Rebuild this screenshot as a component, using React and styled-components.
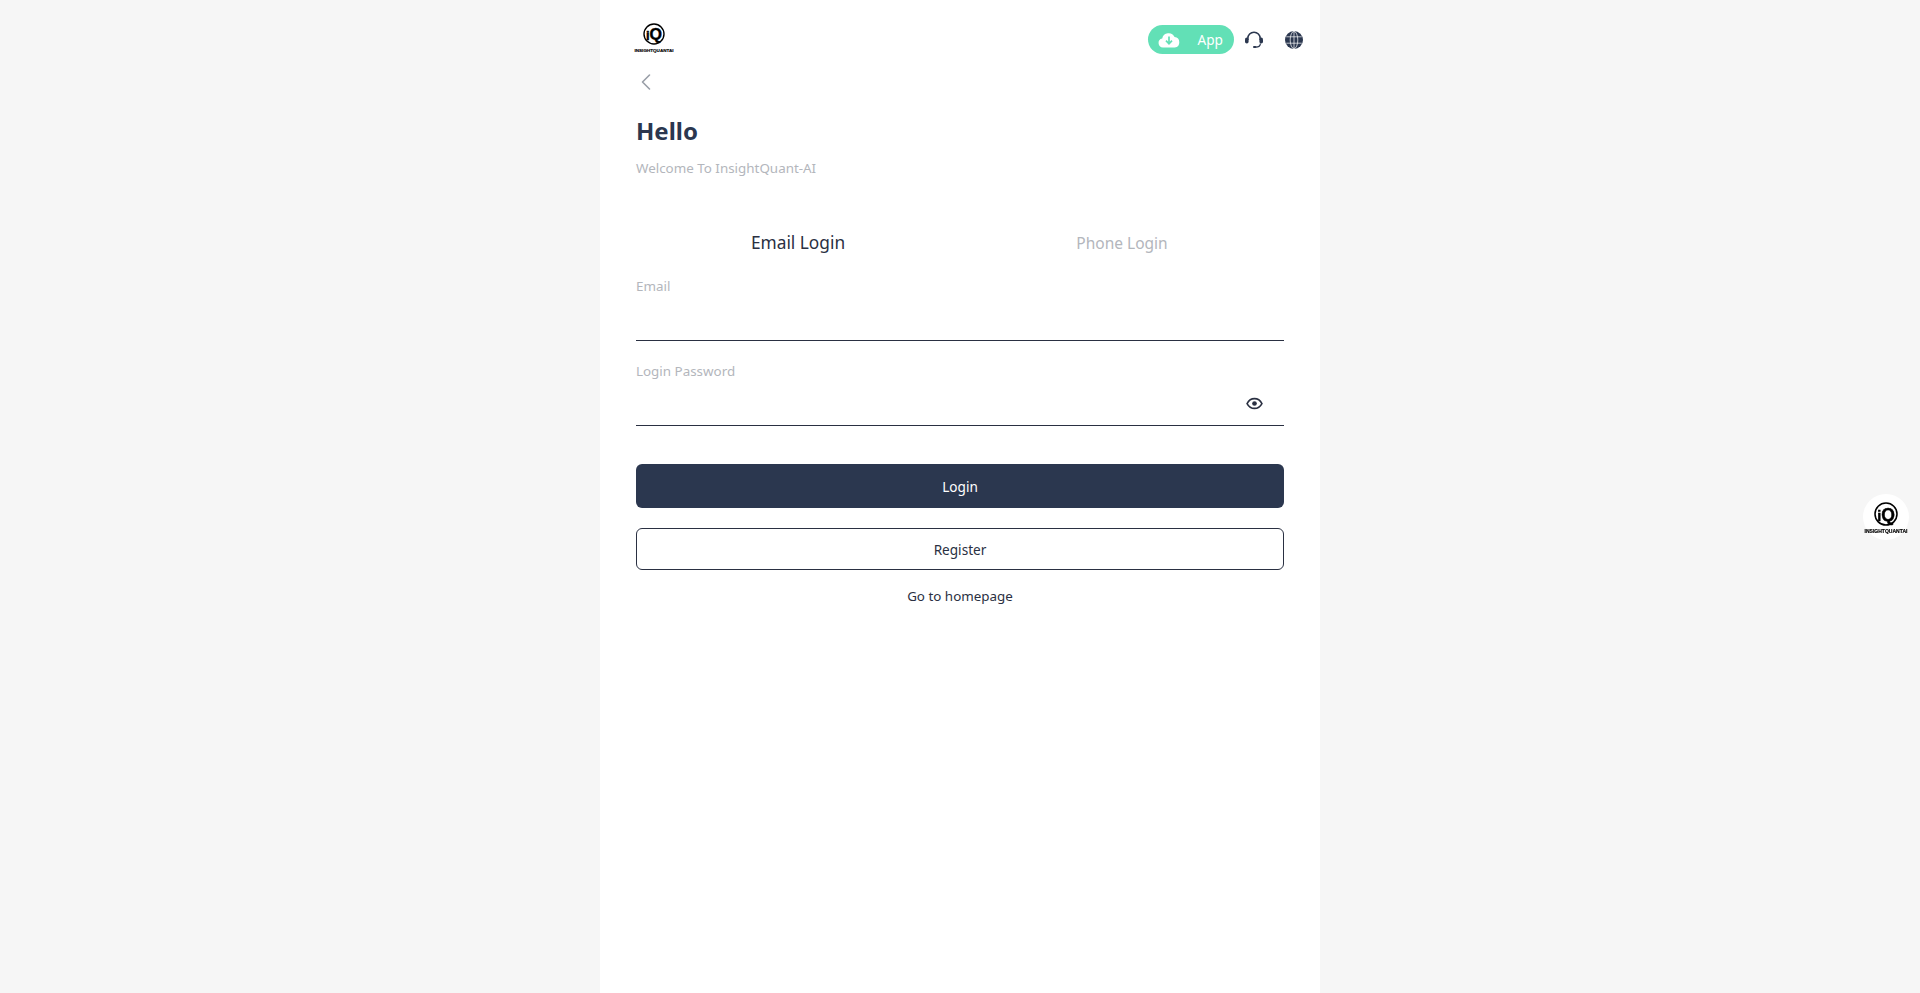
import React from 'react';
import styled, { createGlobalStyle } from 'styled-components';
import { ChevronLeft } from 'lucide-react';

const GlobalStyle = createGlobalStyle`
  html, body {
    margin: 0;
    padding: 0;
    background: #f6f6f6;
    font-family: "Noto Sans", "Open Sans", sans-serif;
    color: #2b374f;
  }
  * {
    box-sizing: border-box;
  }
`;

const Logo = ({ size = 40 }) => (
  <LogoSvg width={size} height={size * 0.8} viewBox="0 0 40 32">
    <circle cx="20" cy="11" r="10" fill="#fff" stroke="#000" strokeWidth="1.4" />
    <text x="20" y="17" textAnchor="middle" fontFamily="Liberation Sans" fontWeight="700" fill="#000" stroke="#000" strokeWidth="0.4">
      <tspan fontSize="13">i</tspan>
      <tspan fontSize="16">Q</tspan>
    </text>
    <text x="20" y="28.500" textAnchor="middle" fontFamily="Liberation Sans" fontWeight="700" fontSize="4.3" textLength="39" lengthAdjust="spacingAndGlyphs" fill="#000" stroke="#000" strokeWidth="0.15">
      INSIGHTQUANTAI
    </text>
  </LogoSvg>
);

const CloudIcon = () => (
  <svg width="22" height="16" viewBox="0 0 22 16">
    <path
      d="M5 15.5a4.6 4.6 0 0 1-.8-9.1A6.6 6.6 0 0 1 16.6 5a5.3 5.3 0 0 1 .2 10.5Z"
      fill="#fff"
    />
    <path d="M11 4.5v6.6M8 8.6l3 3.2 3-3.2" fill="none" stroke="#62e0b6" strokeWidth="1.7" />
  </svg>
);

const HeadsetIcon = () => (
  <svg width="20" height="18" viewBox="0 0 20 18">
    <path d="M3.8 9V7.4a6.2 6.2 0 0 1 12.4 0V9" fill="none" stroke="#2b374f" strokeWidth="1.6" />
    <rect x="1" y="6.6" width="3.6" height="6" rx="1.8" fill="#2b374f" />
    <rect x="15.4" y="6.6" width="3.6" height="6" rx="1.8" fill="#2b374f" />
    <path d="M16.4 12.5c0 2.4-2.2 3.6-4.8 3.6" fill="none" stroke="#2b374f" strokeWidth="1.2" />
    <rect x="9" y="15" width="3.4" height="2" rx="1" fill="#2b374f" />
  </svg>
);

const GlobeIcon = () => (
  <svg width="18" height="18" viewBox="0 0 18 18">
    <circle cx="9" cy="9" r="9" fill="#2b374f" />
    <g fill="none" stroke="#fff" strokeWidth="0.7">
      <ellipse cx="9" cy="9" rx="3.8" ry="8.6" />
      <path d="M9 0v18M1.2 5.8h15.6M1.2 12.2h15.6" />
    </g>
  </svg>
);

const EyeIcon = () => (
  <svg width="17" height="13" viewBox="0 0 16 12">
    <path d="M1 6c1.6-3 4-4.6 7-4.6S13.400 3 15 6c-1.600 3-4 4.600-7 4.600S2.600 9 1 6Z" fill="none" stroke="#2a3042" strokeWidth="1.5" />
    <circle cx="8" cy="6" r="2.200" fill="#2a3042" />
  </svg>
);

const App = () => {
  return (
    <Page>
      <GlobalStyle />
      <Panel>
        <TopBar>
          <LogoSlot>
            <Logo />
          </LogoSlot>
          <TopActions>
            <AppPill>
              <CloudIcon />
              <span>App</span>
            </AppPill>
            <IconSlot>
              <HeadsetIcon />
            </IconSlot>
            <IconSlot>
              <GlobeIcon />
            </IconSlot>
          </TopActions>
        </TopBar>
        <Content>
          <BackRow>
            <ChevronLeft size={28} strokeWidth={1.4} color="#9a9fa8" />
          </BackRow>
          <Title>Hello</Title>
          <Subtitle>Welcome To InsightQuant-AI</Subtitle>
          <Tabs>
            <Tab $active>Email Login</Tab>
            <Tab>Phone Login</Tab>
          </Tabs>
          <Field>
            <FieldLabel>Email</FieldLabel>
            <FieldRow />
          </Field>
          <Field>
            <FieldLabel>Login Password</FieldLabel>
            <FieldRow>
              <EyeIcon />
            </FieldRow>
          </Field>
          <PrimaryButton>Login</PrimaryButton>
          <OutlineButton>Register</OutlineButton>
          <HomeLink>Go to homepage</HomeLink>
        </Content>
      </Panel>
      <FloatBadge>
        <Logo size={44} />
      </FloatBadge>
    </Page>
  );
};

const Page = styled.div`
  display: flex;
  justify-content: center;
  min-height: 993px;
`;

const Panel = styled.main`
  width: 720px;
  height: 993px;
  background: #fff;
  overflow: hidden;
`;

const LogoSvg = styled.svg`
  display: block;
`;

const LogoSlot = styled.div`
  margin-top: -2px;
`;

const TopBar = styled.header`
  display: flex;
  align-items: center;
  justify-content: space-between;
  height: 58px;
  padding: 21px 16px 0 34px;
`;

const TopActions = styled.div`
  display: flex;
  align-items: center;
`;

const AppPill = styled.div`
  display: flex;
  align-items: center;
  justify-content: space-between;
  width: 86px;
  height: 29px;
  padding: 0 11px 0 10px;
  border-radius: 15px;
  background: #62e0b6;
  color: #fff;
  font-size: 13.6px;
`;

const IconSlot = styled.div`
  display: flex;
  align-items: center;
  justify-content: center;
  width: 20px;
  height: 20px;
  margin-left: 10px;
  & + & {
    margin-left: 20px;
  }
`;

const Content = styled.div`
  padding: 0 36px;
`;

const BackRow = styled.div`
  display: flex;
  height: 28px;
  margin-top: 10px;
  margin-left: -4px;
`;

const Title = styled.h1`
  margin: 19px 0 0;
  font-size: 24px;
  line-height: 32px;
  font-weight: 700;
  color: #2b374f;
`;

const Subtitle = styled.p`
  margin: 11px 0 0;
  font-size: 13.4px;
  line-height: 20px;
  color: #b3b6bc;
`;

const Tabs = styled.div`
  display: flex;
  height: 27px;
  margin-top: 51px;
`;

const Tab = styled.div`
  flex: 1;
  text-align: center;
  font-size: ${(p) => (p.$active ? '17.3px' : '15.500px')};
  line-height: 28px;
  color: ${(p) => (p.$active ? '#2a3042' : '#b3b6bc')};
`;

const Field = styled.div`
  margin-top: 20px;
`;

const FieldLabel = styled.div`
  font-size: 13.4px;
  line-height: 20px;
  color: #b3b6bc;
`;

const FieldRow = styled.div`
  display: flex;
  align-items: center;
  justify-content: flex-end;
  height: 45px;
  padding-right: 21px;
  padding-top: 1px;
  border-bottom: 1px solid #2a3042;
`;

const PrimaryButton = styled.button`
  display: block;
  width: 100%;
  height: 44px;
  margin-top: 38px;
  border: none;
  border-radius: 6px;
  background: #2b374f;
  color: #fff;
  font: inherit;
  font-size: 13.6px;
`;

const OutlineButton = styled.button`
  display: block;
  width: 100%;
  height: 42px;
  margin-top: 20px;
  border: 1px solid #2a3042;
  border-radius: 6px;
  background: #fff;
  color: #2a3042;
  font: inherit;
  font-size: 13.6px;
`;

const HomeLink = styled.div`
  margin-top: 16px;
  text-align: center;
  font-size: 13.4px;
  line-height: 20px;
  color: #2a3042;
`;

const FloatBadge = styled.div`
  position: fixed;
  left: 1863px;
  top: 494px;
  display: flex;
  align-items: center;
  justify-content: center;
  width: 46px;
  height: 46px;
  padding-top: 5px;
  border-radius: 50%;
  background: #fff;
`;

export default App;
